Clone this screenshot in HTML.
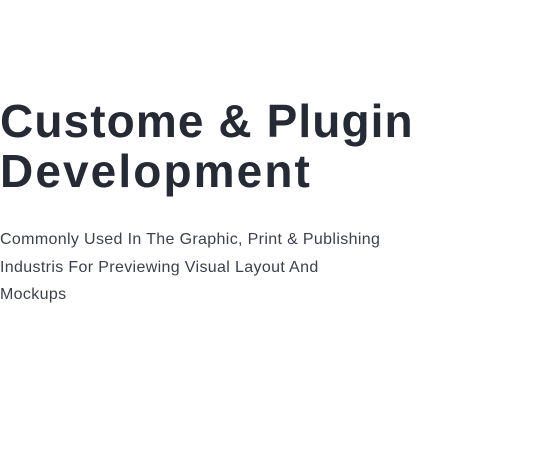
<!DOCTYPE html>
<html><head><meta charset="utf-8"><style>
html,body{margin:0;padding:0;background:#fff;width:548px;height:450px;overflow:hidden}
h1{position:absolute;left:0;top:96px;margin:0;font-family:"Liberation Sans",sans-serif;font-weight:700;font-size:46px;line-height:50px;color:#262a35;letter-spacing:1.1px;white-space:nowrap}
h1 span{letter-spacing:2.1px}
p{position:absolute;left:0;top:226px;margin:0;width:400px;font-family:"Liberation Sans",sans-serif;font-size:16px;line-height:27.5px;color:#3b404b;letter-spacing:0.35px;white-space:nowrap}
</style></head><body>
<h1>Custome &amp; Plugin<br><span>Development</span></h1>
<p>Commonly Used In The Graphic, Print &amp; Publishing<br>Industris For Previewing Visual Layout And<br>Mockups</p>
</body></html>
